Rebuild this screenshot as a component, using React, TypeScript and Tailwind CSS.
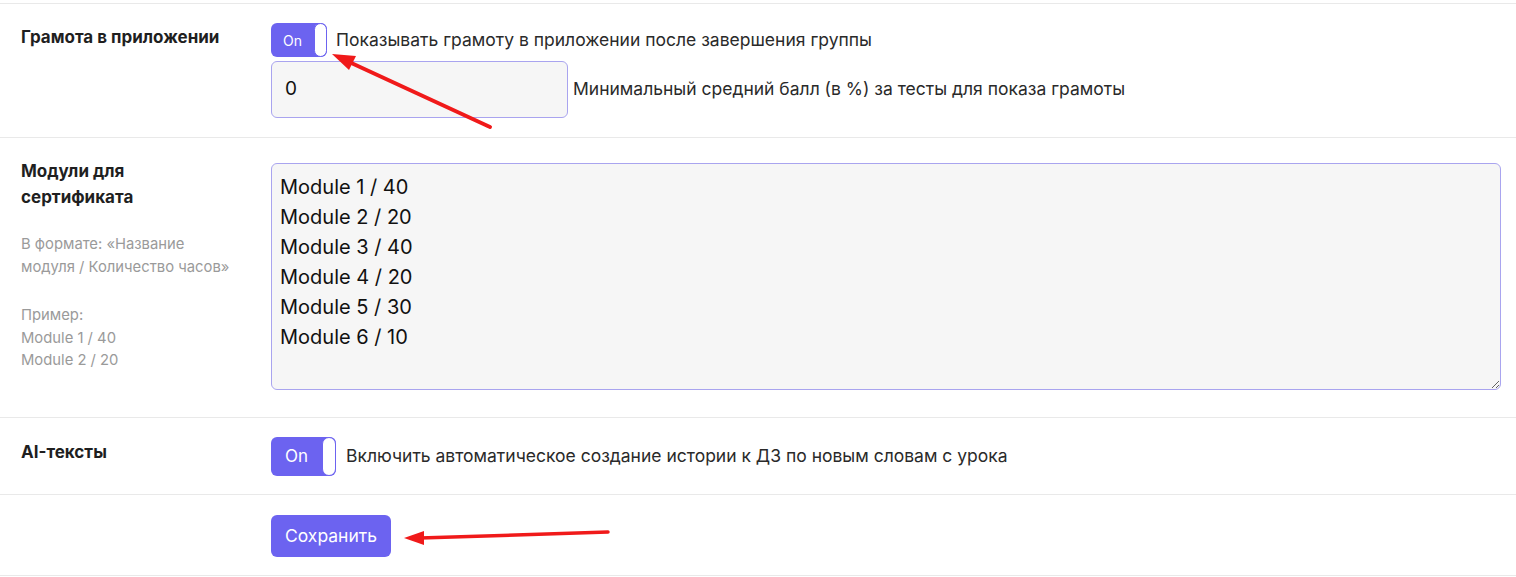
import React from "react";

const font = { fontFamily: "Inter, 'Noto Sans', sans-serif" };

function Toggle({ big }: { big?: boolean }) {
  return (
    <div
      className={`flex shrink-0 items-stretch rounded-md bg-[#6c63f0] ${
        big ? "h-[39px] w-[65px]" : "h-[34px] w-[56px]"
      }`}
    >
      <span
        className={`flex flex-1 items-center justify-center text-white ${
          big ? "text-[17px]" : "text-[14px]"
        }`}
      >
        On
      </span>
      <span
        className={`rounded-full border border-[#6c63f0] bg-white ${
          big ? "w-[14px]" : "w-[13px]"
        }`}
      />
    </div>
  );
}

function Row({
  label,
  children,
  className,
}: {
  label?: React.ReactNode;
  children: React.ReactNode;
  className: string;
}) {
  return (
    <div className={`flex border-b border-[#e9e9e9] ${className}`}>
      <div className="w-[271px] shrink-0 pl-[21px] pr-4">{label}</div>
      <div className="flex-1 pr-[15px]">{children}</div>
    </div>
  );
}

export default function App() {
  return (
    <div className="relative w-[1516px] h-[577px] bg-white text-[#222]" style={font}>
      <div className="h-[4px] border-b border-[#e9e9e9]" />

      <Row
        className="pt-[19px] pb-[19px]"
        label={<div className="pt-[2px] text-[17px] font-bold leading-[24px] text-[#1f1f1f]">Грамота в приложении</div>}
      >
        <div className="flex items-center gap-[9px]">
          <Toggle />
          <span className="text-[17.5px] text-[#2a2a2a]">Показывать грамоту в приложении после завершения группы</span>
        </div>
        <div className="mt-[4px] flex items-center gap-[5px]">
          <div className="flex h-[57px] w-[297px] items-center rounded-md border border-[#a9a4ef] bg-[#f6f6f6] pl-[13px] text-[19px] text-[#111]">
            0
          </div>
          <span className="text-[17.5px] text-[#2a2a2a]">Минимальный средний балл (в %) за тесты для показа грамоты</span>
        </div>
      </Row>

      <Row
        className="pt-[25px] pb-[27px]"
        label={
          <div>
            <div className="-mt-[5px] text-[17px] font-bold leading-[26px] text-[#1f1f1f]">
              Модули для
              <br />
              сертификата
            </div>
            <div className="mt-[23px] text-[14.8px] leading-[23px] text-[#9a9a9a]">
              В формате: «Название
              <br />
              модуля / Количество часов»
            </div>
            <div className="mt-[25px] text-[14.8px] leading-[22.5px] text-[#9a9a9a]">
              Пример:
              <br />
              Module 1 / 40
              <br />
              Module 2 / 20
            </div>
          </div>
        }
      >
        <textarea
          readOnly
          className="block h-[227px] w-full resize-y rounded-md border border-[#a9a4ef] bg-[#f6f6f6] px-[8px] pt-[8px] text-[20px] leading-[30px] text-[#111] outline-none"
          style={font}
          defaultValue={"Module 1 / 40\nModule 2 / 20\nModule 3 / 40\nModule 4 / 20\nModule 5 / 30\nModule 6 / 10"}
        />
      </Row>

      <Row
        className="pt-[19px] pb-[18px]"
        label={<div className="pt-[3px] text-[17px] font-bold leading-[24px] text-[#1f1f1f]">AI-тексты</div>}
      >
        <div className="flex items-center gap-[10px]">
          <Toggle big />
          <span className="text-[17.5px] text-[#2a2a2a]">Включить автоматическое создание истории к ДЗ по новым словам с урока</span>
        </div>
      </Row>

      <Row className="pt-[20px] pb-[18px]">
        <button className="h-[42px] w-[120px] rounded-md bg-[#6c63f0] text-[17.5px] text-white" style={font}>
          Сохранить
        </button>
      </Row>

      <svg className="pointer-events-none absolute inset-0" width="1516" height="577">
        <line x1="490" y1="127" x2="347" y2="61" stroke="#f01a1a" strokeWidth="4" strokeLinecap="round" />
        <polygon points="332,54 356,56 349,70" fill="#f01a1a" />
        <line x1="608" y1="532" x2="420" y2="538" stroke="#f01a1a" strokeWidth="3.5" strokeLinecap="round" />
        <polygon points="404,538 424,531 424,545" fill="#f01a1a" />
      </svg>
    </div>
  );
}
